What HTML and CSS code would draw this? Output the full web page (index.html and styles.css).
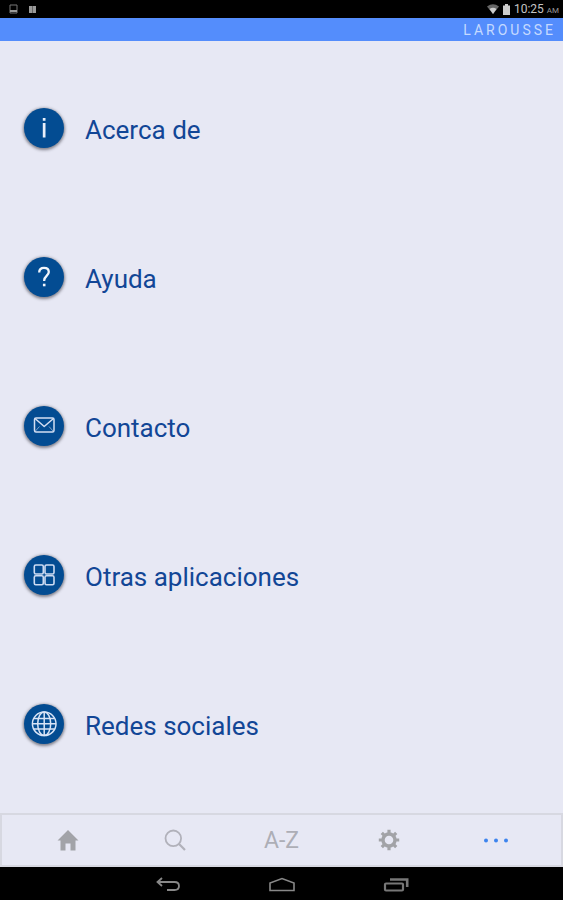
FILE: index.html
```html
<!DOCTYPE html>
<html lang="es">
<head>
<meta charset="utf-8">
<meta name="viewport" content="width=device-width, initial-scale=1">
<title>Larousse</title>
<link rel="stylesheet" href="styles.css">
</head>
<body>
<div class="status">
  <div class="status-group notices">
    <svg width="9" height="10" viewBox="0 0 9 10" fill="none" stroke="#777"><path d="M1 1h7v8H1z"/><path d="M1 7h7" stroke="#999" stroke-width="2"/></svg>
    <svg width="7" height="7" viewBox="0 0 7 7" fill="#9a9a9a"><path d="M0 0h3v7H0zM4 0h3v7H4z"/><path d="M3 0h1v7H3z" fill="#666"/></svg>
  </div>
  <div class="status-group">
    <svg width="12" height="10" viewBox="0 0 12 10"><path d="M0 2.500Q6-2 12 2.500L6 10z" fill="#666"/><path d="M2.500 5Q6 2.500 9.500 5L6 10z" fill="#ccc"/></svg>
    <svg width="7" height="11" viewBox="0 0 7 11"><path d="M2 0h3v1.500h2V11H0V1.500h2z" fill="#ccc"/></svg>
    <span class="clock">10:25 <small>AM</small></span>
  </div>
</div>
<header class="brand">LAROUSSE</header>
<main class="content">
  <ul class="menu">
    <li><a class="entry" href="#acerca"><span class="disc"><svg width="28" height="28" viewBox="0 0 28 28" fill="#e9effa"><path d="M12.800 4h2.700v2.800h-2.700zM12.800 9h2.700v14.500h-2.700z"/></svg></span><span class="label">Acerca de</span></a></li>
    <li><a class="entry" href="#ayuda"><span class="disc"><svg width="28" height="28" viewBox="0 0 28 28" fill="none" stroke="#f1f5fc" stroke-width="2.300"><path d="M9.200 9.500C9.200 6.500 11 4.800 14 4.800s4.800 1.700 4.800 4.200c0 3.500-4.600 4.200-4.600 8.200v.8"/><path d="M12.900 22h2.600" stroke-width="2.600"/></svg></span><span class="label">Ayuda</span></a></li>
    <li><a class="entry" href="#contacto"><span class="disc"><svg width="28" height="28" viewBox="0 0 28 28" fill="none" stroke="#d3def2" stroke-width="1.500" stroke-linejoin="round"><rect x="4.500" y="6" width="19.500" height="14" rx="1.500"/><path d="M5 6.500l9.200 8L23.500 6.500"/><path d="M5 19.500l4.500-5M23.500 19.500L19 14.500" stroke-width="1" opacity=".6"/></svg></span><span class="label">Contacto</span></a></li>
    <li><a class="entry" href="#otras"><span class="disc"><svg width="28" height="28" viewBox="0 0 28 28" fill="none" stroke="#cddbf2" stroke-width="1.600"><rect x="4.300" y="4" width="9" height="9" rx="1.500"/><rect x="15" y="4" width="9" height="9" rx="1.500"/><rect x="4.300" y="14.700" width="9" height="9" rx="1.500"/><rect x="15" y="14.700" width="9" height="9" rx="1.500"/></svg></span><span class="label">Otras aplicaciones</span></a></li>
    <li><a class="entry" href="#redes"><span class="disc"><svg width="28" height="28" viewBox="0 0 28 28" fill="none" stroke="#d9e4f6" stroke-width="1.500"><circle cx="14.200" cy="13.800" r="11.800"/><ellipse cx="14.200" cy="13.800" rx="6.500" ry="11.800"/><path d="M14.200 2v23.600M2.400 13.800H26M4 8.500h20.400M4 19h20.400"/></svg></span><span class="label">Redes sociales</span></a></li>
  </ul>
</main>
<nav class="tabs">
  <a href="#inicio" aria-label="Inicio"><svg width="22" height="22" viewBox="0 0 22 22" fill="#a2a3a8"><path d="M11 1L21.500 11.500H18.500V21.500H13.500V14.500h-5v7h-5V11.500H.5z"/></svg></a>
  <a href="#buscar" aria-label="Buscar"><svg width="22" height="22" viewBox="0 0 22 22" fill="none" stroke="#b1b1ba" stroke-width="1.800"><circle cx="9.300" cy="9.300" r="7.800"/><path d="M14.800 14.800L21 21" stroke-width="2.200"/></svg></a>
  <a href="#indice">A-Z</a>
  <a href="#ajustes" aria-label="Ajustes"><svg width="22" height="22" viewBox="0 0 22 22" fill="none" stroke="#a2a3a7"><circle cx="11" cy="11" r="6" stroke-width="3.400"/><path d="M11 .8v3.500M11 17.700v3.500M.8 11h3.500M17.700 11h3.500M3.800 3.800l2.500 2.500M15.700 15.700l2.500 2.500M3.800 18.200l2.500-2.500M15.700 6.300l2.500-2.500" stroke-width="3.200"/></svg></a>
  <a href="#mas" aria-label="Más"><svg width="28" height="22" viewBox="0 0 28 22" fill="#3d84ee"><circle cx="4" cy="11.500" r="2"/><circle cx="14" cy="11.500" r="2"/><circle cx="24" cy="11.500" r="2"/></svg></a>
</nav>
<footer class="system">
  <button type="button" aria-label="Atrás"><svg width="26" height="16" viewBox="0 0 26 16" fill="none" stroke="#888" stroke-width="1.800"><path d="M7 2L2.500 6 7 10M3 6h16.500c6 0 6 8 0 8H12"/></svg></button>
  <button type="button" aria-label="Pantalla de inicio"><svg width="26" height="16" viewBox="0 0 26 16" fill="none" stroke="#888" stroke-width="1.600"><path d="M1 14.500V7L13 2.500 25 7v7.500z"/></svg></button>
  <button type="button" aria-label="Recientes"><svg width="26" height="16" viewBox="0 0 26 16" fill="none" stroke="#777"><rect x="2" y="7.500" width="18" height="7" rx="1" stroke-width="2.200"/><path d="M7 3.500h17.200V11" stroke-width="2.600"/></svg></button>
</footer>
</body>
</html>
```
FILE: styles.css
```css
* {
  box-sizing: border-box;
}

body {
  display: flex;
  flex-direction: column;
  min-height: 100vh;
  margin: 0;
  background: #e7e8f4;
  font-family: Roboto, "Liberation Sans", sans-serif;
}

a {
  color: inherit;
  text-decoration: none;
}

svg {
  display: block;
}

.status {
  display: flex;
  align-items: center;
  justify-content: space-between;
  height: 18px;
  padding: 0 4px 0 9px;
  background: #000;
}

.status-group {
  display: flex;
  align-items: center;
  gap: 4px;
}

.notices {
  gap: 11px;
}

.clock {
  padding-top: 2px;
  color: #c4c4c4;
  font-size: 12px;
  line-height: 16px;
}

.clock small {
  color: #999;
  font-size: 8px;
}

.brand {
  height: 23px;
  padding-right: 7px;
  background: #548dfc;
  color: #c5daff;
  font-size: 14px;
  line-height: 24px;
  letter-spacing: 3px;
  text-align: right;
}

.content {
  display: flex;
  flex: 1;
  padding: 12px 24px 14px;
}

.menu {
  display: grid;
  flex: 1;
  grid-auto-rows: 1fr;
  margin: 0;
  padding: 0;
  list-style: none;
}

.menu li {
  display: flex;
  align-items: center;
}

.entry {
  display: flex;
  align-items: center;
  gap: 21px;
  color: #124696;
  font-size: 26px;
  line-height: 32px;
}

.label {
  padding-top: 4px;
}

.disc {
  display: grid;
  place-items: center;
  width: 40px;
  height: 40px;
  border-radius: 50%;
  background: #034c92;
  box-shadow: 0 1px 3px 1px rgba(60, 60, 70, 0.6);
}

.tabs {
  display: flex;
  height: 54px;
  padding: 0 12px;
  border: 2px solid #d7d8e1;
  color: #adaeb6;
  font-size: 23px;
}

.tabs a {
  display: flex;
  flex: 1;
  align-items: center;
  justify-content: center;
}

.system {
  display: flex;
  justify-content: center;
  height: 33px;
  background: #000;
}

.system button {
  display: grid;
  place-items: center;
  width: 114px;
  padding: 0;
  border: 0;
  background: none;
}
```
